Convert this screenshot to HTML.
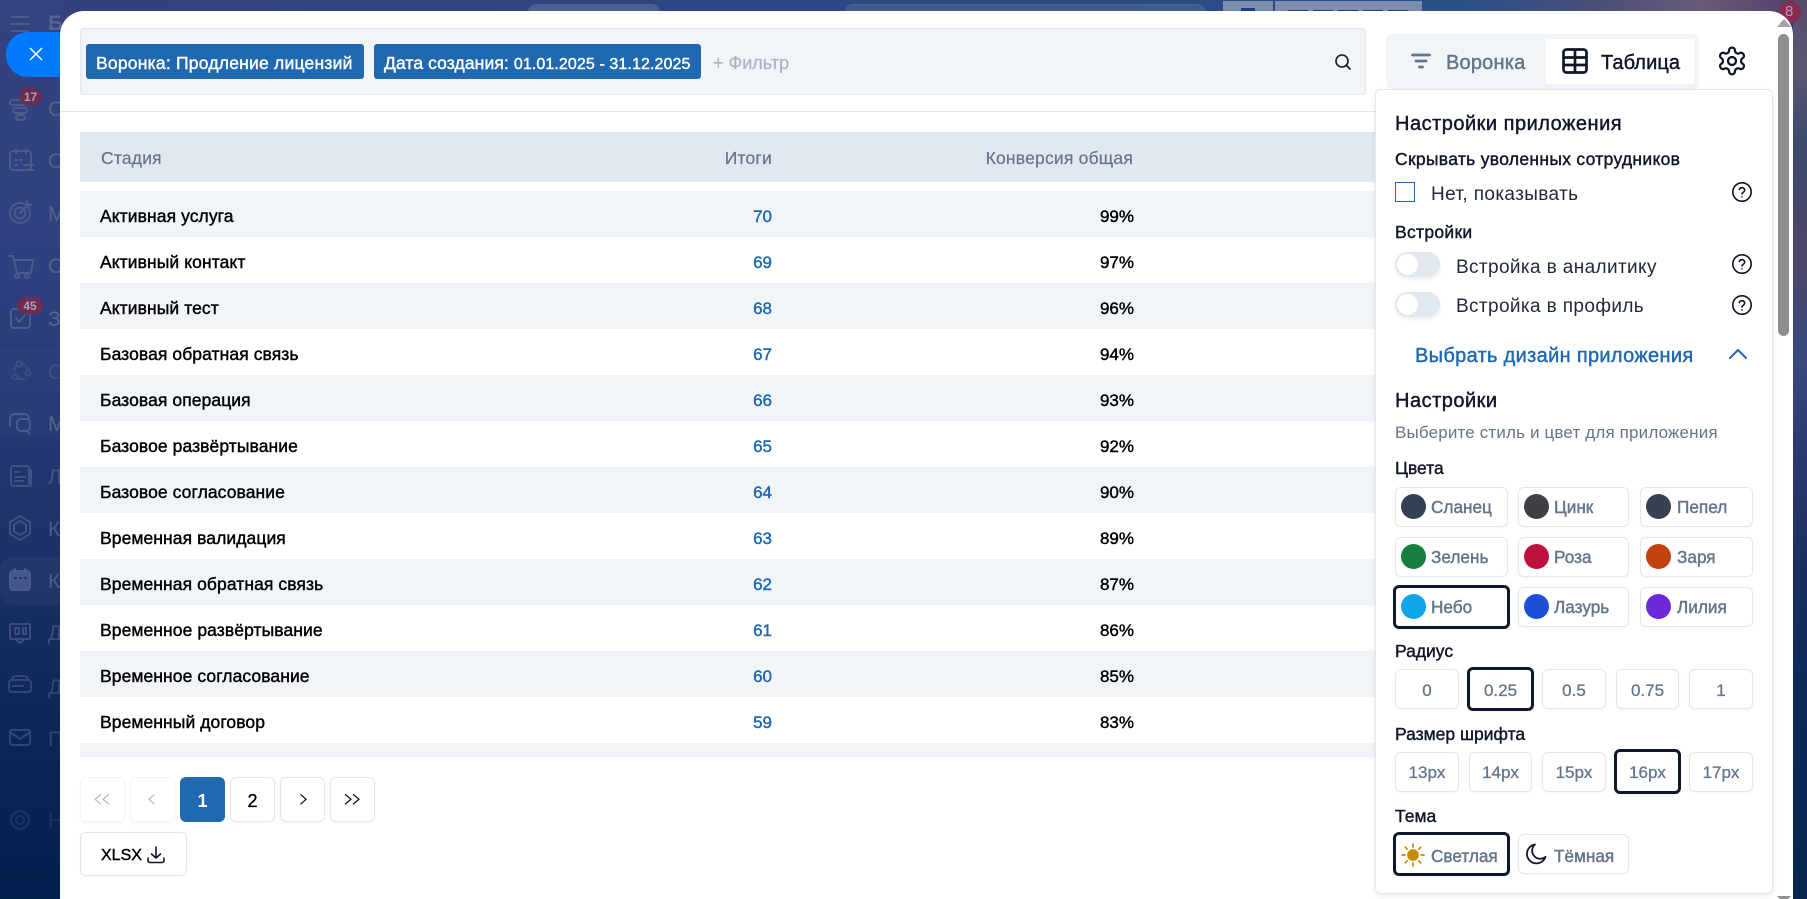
<!DOCTYPE html>
<html lang="ru"><head><meta charset="utf-8"><title>Таблица</title>
<style>
*{box-sizing:border-box}
html,body{margin:0;padding:0;width:1807px;height:899px;overflow:hidden;background:#0a2350}
body{position:relative;font-family:"Liberation Sans","Noto Sans CJK SC",sans-serif;font-size:16px;color:#000}
.a{position:absolute}
.t{position:absolute;white-space:nowrap;line-height:20px;height:20px}
.m{-webkit-text-stroke:.42px currentColor}
.r{text-align:right}
.row{position:absolute;left:80px;width:1300px;height:46px}
.odd{background:#f1f5f9}
.n{color:#2068b0;font-size:17px}
.g{color:#64748b}
.l{font-size:17.5px;letter-spacing:.08px}
.p{font-size:17px}
.h{font-size:17.5px;letter-spacing:.2px;-webkit-text-stroke:.2px currentColor}
.lab{font-size:17.500px;color:#0f172a}
.bl{font-size:17.2px}
.big{font-size:20px;letter-spacing:.5px;color:#0f172a}
.reg{font-size:19px;letter-spacing:.38px;color:#1e293b}
.b{position:absolute;background:#fff;border:1px solid #e2e8f0;border-radius:6px;box-shadow:0 1px 2px rgba(0,0,0,.04)}
.s{border:3px solid #0f172a}
.c{position:absolute;width:25px;height:25px;border-radius:50%}
.cen{position:absolute;text-align:center;white-space:nowrap;line-height:20px;font-size:17px;color:#64748b;-webkit-text-stroke:.3px currentColor}
svg{position:absolute;display:block;overflow:visible}
.ic{fill:none;stroke:#4b5c8a;stroke-width:2;stroke-linecap:round;stroke-linejoin:round}
.side{position:absolute;left:48px;font-size:21px;line-height:32px;color:#55658f;white-space:nowrap}
</style></head>
<body>
<!-- background -->
<div class="a" style="left:0;top:0;width:1807px;height:899px;background:linear-gradient(180deg,#33437f 0,#2f4080 30%,#1c3268 60%,#0d2656 80%,#04204d 100%)"></div>
<div class="a" style="left:60px;top:0;width:1747px;height:12px;background:linear-gradient(90deg,#33427f 0,#2e4684 40%,#2a5088 80%,#4b4f78 88%,#6a5a78 94%,#4c3f6a 100%)"></div>
<div class="a" style="left:1793px;top:0;width:14px;height:899px;background:linear-gradient(180deg,#564d6e 0,#5a5670 8%,#3a4a6e 16%,#4d4668 28%,#38497f 40%,#2d3a72 50%,#1c2f62 62%,#0e2a5c 75%,#08244f 100%)"></div>
<div class="a" style="left:528px;top:4px;width:132px;height:10px;background:#4b6091;border-radius:8px 8px 0 0"></div>
<div class="a" style="left:845px;top:4px;width:360px;height:10px;background:#3d5d8c;border-radius:8px 8px 0 0;border:1px solid #47658f"></div>
<div class="a" style="left:1223px;top:1px;width:50px;height:12px;background:#7d8db0"></div>
<div class="a" style="left:1275px;top:1px;width:147px;height:12px;background:#7d8db0"></div>
<div class="a" style="left:1241px;top:8px;width:14px;height:5px;background:#1c3f80"></div>
<div class="a" style="left:1288px;top:10px;width:120px;height:3px;background:repeating-linear-gradient(90deg,#1c3f80 0,#1c3f80 20px,#7d8db0 20px,#7d8db0 25px)"></div>
<div class="a" style="left:1779px;top:1px;width:22px;height:22px;border-radius:50%;background:#8a2c52"></div>
<div class="t" style="left:1785px;top:2px;color:#a99cc0;font-size:15px">8</div>

<!-- sidebar -->
<div class="a" style="left:0;top:348px;width:60px;height:90px;background:rgba(255,255,255,.015)"></div>
<div class="a" style="left:0;top:557px;width:60px;height:48px;background:rgba(255,255,255,.035);border-radius:12px 0 0 12px"></div>
<svg style="left:0;top:0" width="60" height="899" viewBox="0 0 60 899" class="ic">
<path d="M11 17h18M11 24h18M11 31h18"/>
<rect x="10" y="100" width="16" height="5" rx="2.5"/><rect x="13" y="108" width="14" height="5" rx="2.5"/><rect x="16" y="115" width="9" height="5" rx="2.5"/>
<rect x="10" y="151" width="21" height="19" rx="3"/><path d="M16 149v4M26 149v4M15 160h2M20 160h2M15 165h2M24 165h9M24 170h9"/>
<circle cx="20" cy="213" r="10"/><circle cx="20" cy="213" r="5.5"/><path d="M20 213l9-9M27 201v4h4"/>
<path d="M9 256h4l4 17h14l2-13H14"/><circle cx="17" cy="276" r="2"/><circle cx="27" cy="276" r="2"/>
<rect x="11" y="309" width="19" height="19" rx="3"/><path d="M16 318l3 4 6-7"/>
<g opacity=".5"><circle cx="19" cy="364" r="2.5"/><circle cx="15" cy="377" r="2.5"/><circle cx="28" cy="373" r="2.5"/><path d="M14 371c1-3 2-5 3-6M23 364c2 1 4 3 5 6M18 379h7"/></g>
<path d="M10 426v-7a5 5 0 0 1 5-5h9a5 5 0 0 1 5 4"/><rect x="17" y="419" width="13" height="12" rx="4"/><path d="M27 431l3 3"/>
<g opacity=".75"><rect x="11" y="466" width="18" height="20" rx="2"/><path d="M15 472h3M15 477h10M15 481h8M29 470h2v16"/></g>
<g opacity=".75"><path d="M20 516l10 6v12l-10 6-10-6v-12z"/><path d="M20 521l6 3.500v7l-6 3.500-6-3.500v-7z"/></g>
<rect x="10" y="571" width="20" height="19" rx="3" fill="#45578a"/><path d="M15 569v3M25 569v3"/><path d="M15 578h1M20 578h1M25 578h1" stroke="#1c3268"/>
<g opacity=".7"><rect x="10" y="624" width="20" height="15" rx="1"/><path d="M15 639l5 4 5-4M15 628h4v6h-4zM23 628h3v6h-3z"/></g>
<g opacity=".6"><rect x="9" y="680" width="22" height="12" rx="3"/><path d="M13 686h10M12 680c0-3 2-4 4-4h8c2 0 4 1 4 4"/></g>
<g opacity=".6"><rect x="10" y="730" width="20" height="15" rx="2"/><path d="M10 732l10 7 10-7"/></g>
<g opacity=".3"><circle cx="20" cy="820" r="4"/><circle cx="20" cy="820" r="9"/></g>
</svg>
<div class="a" style="left:19px;top:88px;width:23px;height:17px;border-radius:9px;background:#6f2c50"></div>
<div class="t" style="left:19px;top:87px;width:23px;text-align:center;color:#a8a3bb;font-size:12px;font-weight:bold">17</div>
<div class="a" style="left:17px;top:297px;width:26px;height:17px;border-radius:9px;background:#6f2c50"></div>
<div class="t" style="left:17px;top:296px;width:26px;text-align:center;color:#a8a3bb;font-size:12px;font-weight:bold">45</div>
<div class="side" style="top:8px;font-weight:bold">Б</div>
<div class="side" style="top:94px">С</div><div class="side" style="top:146px">О</div><div class="side" style="top:199px">М</div><div class="side" style="top:251px">С</div><div class="side" style="top:304px">З</div><div class="side" style="top:357px;opacity:.45">С</div><div class="side" style="top:409px">М</div><div class="side" style="top:462px;opacity:.7">Л</div><div class="side" style="top:514px;opacity:.8">К</div><div class="side" style="top:566px;opacity:.8">К</div><div class="side" style="top:618px;opacity:.6">Д</div><div class="side" style="top:672px;opacity:.5">Д</div><div class="side" style="top:724px;opacity:.5">П</div><div class="side" style="top:806px;opacity:.25">Н</div>
<div class="a" style="left:6px;top:32px;width:70px;height:45px;background:linear-gradient(90deg,#007bff 0,#007bff 70%,#0a6fe0 100%);border-radius:22px 0 0 22px"></div>
<svg style="left:30px;top:48px" width="12" height="12" viewBox="0 0 12 12"><path d="M0 0L12 12M12 0L0 12" stroke="#fff" stroke-width="1.500" fill="none"/></svg>

<!-- modal -->
<div class="a" style="left:60px;top:11px;width:1733px;height:900px;background:#fff;border-radius:24px 24px 0 0;overflow:hidden"></div>
<div class="a" style="left:60px;top:111px;width:1315px;height:1px;background:#e2e8f0"></div>

<!-- filter bar -->
<div class="a" style="left:80px;top:28px;width:1286px;height:67px;background:#f1f5f9;border:1px solid #e2e8f0;border-radius:3px"></div>
<div class="a" style="left:86px;top:44px;width:278px;height:35px;background:#2068b0;border-radius:3px"></div>
<div class="t m" style="left:96px;top:53px;color:#fff;font-size:17.5px;letter-spacing:.22px">Воронка: Продление лицензий</div>
<div class="a" style="left:374px;top:44px;width:327px;height:35px;background:#2068b0;border-radius:3px"></div>
<div class="t m" style="left:384px;top:53px;color:#fff;font-size:17.5px;letter-spacing:.1px">Дата создания: <span style="font-size:16px">01.01.2025 - 31.12.2025</span></div>
<div class="t" style="left:713px;top:53px;color:#aab4c4;font-size:18px;-webkit-text-stroke:.25px currentColor">+ Фильтр</div>
<svg style="left:1334px;top:53px" width="18" height="18" viewBox="0 0 18 18" fill="none" stroke="#0f172a" stroke-width="1.600" stroke-linecap="round"><circle cx="8" cy="8" r="6"/><path d="M12.500 12.500L16 16"/></svg>

<!-- table -->
<div class="a" style="left:80px;top:132px;width:1300px;height:50px;background:#e2e8f0"></div>
<div class="t g h" style="left:101px;top:148px">Стадия</div>
<div class="t g h r" style="right:1035px;top:148px">Итоги</div>
<div class="t g h r" style="right:674px;top:148px">Конверсия общая</div>

<div class="row odd" style="top:191px"></div>
<div class="row odd" style="top:283px"></div>
<div class="row odd" style="top:375px"></div>
<div class="row odd" style="top:467px"></div>
<div class="row odd" style="top:559px"></div>
<div class="row odd" style="top:651px"></div>
<div class="row odd" style="top:743px;height:14px"></div>

<div class="t m l" style="left:100px;top:206px">Активная услуга</div><div class="t m n r" style="right:1035px;top:207px">70</div><div class="t m p r" style="right:673px;top:207px">99%</div>
<div class="t m l" style="left:100px;top:252px">Активный контакт</div><div class="t m n r" style="right:1035px;top:253px">69</div><div class="t m p r" style="right:673px;top:253px">97%</div>
<div class="t m l" style="left:100px;top:298px">Активный тест</div><div class="t m n r" style="right:1035px;top:299px">68</div><div class="t m p r" style="right:673px;top:299px">96%</div>
<div class="t m l" style="left:100px;top:344px">Базовая обратная связь</div><div class="t m n r" style="right:1035px;top:345px">67</div><div class="t m p r" style="right:673px;top:345px">94%</div>
<div class="t m l" style="left:100px;top:390px">Базовая операция</div><div class="t m n r" style="right:1035px;top:391px">66</div><div class="t m p r" style="right:673px;top:391px">93%</div>
<div class="t m l" style="left:100px;top:436px">Базовое развёртывание</div><div class="t m n r" style="right:1035px;top:437px">65</div><div class="t m p r" style="right:673px;top:437px">92%</div>
<div class="t m l" style="left:100px;top:482px">Базовое согласование</div><div class="t m n r" style="right:1035px;top:483px">64</div><div class="t m p r" style="right:673px;top:483px">90%</div>
<div class="t m l" style="left:100px;top:528px">Временная валидация</div><div class="t m n r" style="right:1035px;top:529px">63</div><div class="t m p r" style="right:673px;top:529px">89%</div>
<div class="t m l" style="left:100px;top:574px">Временная обратная связь</div><div class="t m n r" style="right:1035px;top:575px">62</div><div class="t m p r" style="right:673px;top:575px">87%</div>
<div class="t m l" style="left:100px;top:620px">Временное развёртывание</div><div class="t m n r" style="right:1035px;top:621px">61</div><div class="t m p r" style="right:673px;top:621px">86%</div>
<div class="t m l" style="left:100px;top:666px">Временное согласование</div><div class="t m n r" style="right:1035px;top:667px">60</div><div class="t m p r" style="right:673px;top:667px">85%</div>
<div class="t m l" style="left:100px;top:712px">Временный договор</div><div class="t m n r" style="right:1035px;top:713px">59</div><div class="t m p r" style="right:673px;top:713px">83%</div>

<!-- pagination -->
<div class="b" style="left:80px;top:777px;width:45px;height:45px;border-color:#f1f5f9"></div>
<div class="b" style="left:130px;top:777px;width:45px;height:45px;border-color:#f1f5f9"></div>
<div class="a" style="left:180px;top:777px;width:45px;height:45px;background:#2068b0;border-radius:6px"></div>
<div class="b" style="left:230px;top:777px;width:45px;height:45px"></div>
<div class="b" style="left:280px;top:777px;width:45px;height:45px"></div>
<div class="b" style="left:330px;top:777px;width:45px;height:45px"></div>
<svg style="left:80px;top:777px" width="300" height="45" viewBox="0 0 300 45" fill="none" stroke-width="1.300"><path d="M21 17.300l-6 5 6 5M29 17.300l-6 5 6 5" stroke="#b8bcc4"/><path d="M74.500 17.300l-5.500 5 5.500 5" stroke="#b8bcc4"/><path d="M220.500 17.300l5.500 5-5.500 5" stroke="#0f172a"/><path d="M265 17.300l6 5-6 5M273 17.300l6 5-6 5" stroke="#0f172a"/></svg>
<div class="cen" style="left:180px;top:791px;width:45px;color:#fff;font-weight:bold;font-size:18px;-webkit-text-stroke:0">1</div>
<div class="cen" style="left:230px;top:791px;width:45px;color:#000;font-size:18px">2</div>
<div class="b" style="left:80px;top:832px;width:107px;height:44px"></div>
<div class="t m" style="left:101px;top:846px">XLSX</div>
<svg style="left:147px;top:846px" width="18" height="18" viewBox="0 0 18 18" fill="none" stroke="#0f172a" stroke-width="1.600" stroke-linecap="round" stroke-linejoin="round"><path d="M9 1v11M4.500 8L9 12l4.500-4M1 12v2.500A2 2 0 0 0 3 16.500h12a2 2 0 0 0 2-2V12"/></svg>

<!-- scrollbar -->
<div class="a" style="left:1778px;top:34px;width:11px;height:302px;background:#8f8f8f;border-radius:6px"></div>
<svg style="left:1777px;top:19px" width="14" height="8" viewBox="0 0 14 8"><path d="M7 0L14 8H0z" fill="#a3a3a3"/></svg>
<svg style="left:1777px;top:896px" width="14" height="3" viewBox="0 0 14 3"><path d="M0 0H14L11 3H3z" fill="#8f8f8f"/></svg>

<!-- tabs -->
<div class="a" style="left:1386px;top:34px;width:313px;height:55px;background:#f1f5f9;border-radius:6px"></div>
<div class="a" style="left:1546px;top:39px;width:148px;height:45px;background:#fff"></div>
<svg style="left:1411px;top:53px" width="20" height="16" viewBox="0 0 20 16" fill="none" stroke="#64748b" stroke-width="2.800" stroke-linecap="round"><path d="M1.500 2h17M5 8h10M8.500 14h3"/></svg>
<div class="t m g" style="left:1446px;top:53px;font-size:20px;letter-spacing:.2px">Воронка</div>
<svg style="left:1562px;top:48px" width="26" height="26" viewBox="0 0 26 26" fill="none" stroke="#0f172a" stroke-width="2.700"><rect x="1.500" y="1.500" width="23" height="23" rx="3"/><path d="M1.500 9.500h23M1.500 17h23M13 1.500v23"/></svg>
<div class="t m" style="left:1601px;top:53px;font-size:20px;color:#0f172a;letter-spacing:.1px">Таблица</div>
<svg style="left:1716px;top:45px" width="32" height="32" viewBox="0 0 24 24" fill="none" stroke="#0f172a" stroke-width="1.700" stroke-linecap="round" stroke-linejoin="round"><path d="M12.200 2h-.4a2 2 0 0 0-2 2v.2a2 2 0 0 1-1 1.700l-.4.300a2 2 0 0 1-2 0l-.2-.1a2 2 0 0 0-2.700.7l-.2.400a2 2 0 0 0 .7 2.700l.2.100a2 2 0 0 1 1 1.700v.5a2 2 0 0 1-1 1.700l-.2.100a2 2 0 0 0-.7 2.700l.2.400a2 2 0 0 0 2.700.7l.2-.1a2 2 0 0 1 2 0l.4.300a2 2 0 0 1 1 1.700v.2a2 2 0 0 0 2 2h.4a2 2 0 0 0 2-2v-.2a2 2 0 0 1 1-1.700l.4-.3a2 2 0 0 1 2 0l.2.100a2 2 0 0 0 2.700-.7l.2-.4a2 2 0 0 0-.7-2.700l-.2-.1a2 2 0 0 1-1-1.700v-.5a2 2 0 0 1 1-1.700l.2-.1a2 2 0 0 0 .7-2.700l-.2-.4a2 2 0 0 0-2.700-.7l-.2.100a2 2 0 0 1-2 0l-.4-.3a2 2 0 0 1-1-1.700V4a2 2 0 0 0-2-2z"/><circle cx="12" cy="12" r="3"/></svg>

<!-- settings panel -->
<div class="a" style="left:1375px;top:89px;width:398px;height:805px;background:#fff;border:1px solid #e2e8f0;border-radius:6px;box-shadow:0 2px 6px rgba(15,23,42,.08)"></div>
<div class="t m big" style="left:1395px;top:114px">Настройки приложения</div>
<div class="t m lab" style="left:1395px;top:149px;letter-spacing:.3px">Скрывать уволенных сотрудников</div>
<div class="a" style="left:1395px;top:182px;width:20px;height:20px;border:1px solid #2068b0;background:#fff"></div>
<div class="t reg" style="left:1431px;top:185px">Нет, показывать</div>
<div class="t m lab" style="left:1395px;top:222px;letter-spacing:.3px">Встройки</div>

<div class="a" style="left:1395px;top:252px;width:45px;height:25px;border-radius:13px;background:#e2e8f0;box-shadow:0 2px 4px rgba(15,23,42,.08)"></div>
<div class="a" style="left:1397px;top:254px;width:21px;height:21px;border-radius:50%;background:#fff"></div>
<div class="t reg" style="left:1456px;top:258px">Встройка в аналитику</div>
<div class="a" style="left:1395px;top:292px;width:45px;height:25px;border-radius:13px;background:#e2e8f0;box-shadow:0 2px 4px rgba(15,23,42,.08)"></div>
<div class="a" style="left:1397px;top:294px;width:21px;height:21px;border-radius:50%;background:#fff"></div>
<div class="t reg" style="left:1456px;top:297px">Встройка в профиль</div>

<svg style="left:1732px;top:182px" width="20" height="20" viewBox="0 0 20 20" fill="none" stroke="#0f172a" stroke-width="1.600" stroke-linecap="round"><circle cx="10" cy="10" r="9.200"/><path d="M7.300 7.500a2.800 2.800 0 0 1 5.400.7c0 1.800-2.700 2.200-2.700 3.800"/><path d="M10 14.800v.1"/></svg>
<svg style="left:1732px;top:254px" width="20" height="20" viewBox="0 0 20 20" fill="none" stroke="#0f172a" stroke-width="1.600" stroke-linecap="round"><circle cx="10" cy="10" r="9.200"/><path d="M7.300 7.500a2.800 2.800 0 0 1 5.400.7c0 1.800-2.700 2.200-2.700 3.800"/><path d="M10 14.800v.1"/></svg>
<svg style="left:1732px;top:295px" width="20" height="20" viewBox="0 0 20 20" fill="none" stroke="#0f172a" stroke-width="1.600" stroke-linecap="round"><circle cx="10" cy="10" r="9.200"/><path d="M7.300 7.500a2.800 2.800 0 0 1 5.400.7c0 1.800-2.700 2.200-2.700 3.800"/><path d="M10 14.800v.1"/></svg>

<div class="t m" style="left:1415px;top:346px;font-size:20px;color:#2068b0;letter-spacing:.32px">Выбрать дизайн приложения</div>
<svg style="left:1729px;top:349px" width="18" height="10" viewBox="0 0 18 10" fill="none" stroke="#2068b0" stroke-width="2" stroke-linecap="round" stroke-linejoin="round"><path d="M1 9l8-8 8 8"/></svg>
<div class="t m big" style="left:1395px;top:391px">Настройки</div>
<div class="t g" style="left:1395px;top:423px;font-size:17px;letter-spacing:.16px">Выберите стиль и цвет для приложения</div>
<div class="t m lab" style="left:1395px;top:458px">Цвета</div>

<div class="b" style="left:1395px;top:487px;width:113px;height:40px"></div>
<div class="b" style="left:1518px;top:487px;width:111px;height:40px"></div>
<div class="b" style="left:1640px;top:487px;width:113px;height:40px"></div>
<div class="b" style="left:1395px;top:537px;width:113px;height:40px"></div>
<div class="b" style="left:1518px;top:537px;width:111px;height:40px"></div>
<div class="b" style="left:1640px;top:537px;width:113px;height:40px"></div>
<div class="b s" style="left:1393px;top:585px;width:117px;height:44px"></div>
<div class="b" style="left:1518px;top:587px;width:111px;height:40px"></div>
<div class="b" style="left:1640px;top:587px;width:113px;height:40px"></div>

<div class="c" style="left:1401px;top:494px;background:#334155"></div>
<div class="c" style="left:1524px;top:494px;background:#3f3f46"></div>
<div class="c" style="left:1646px;top:494px;background:#374151"></div>
<div class="c" style="left:1401px;top:544px;background:#15803d"></div>
<div class="c" style="left:1524px;top:544px;background:#be123c"></div>
<div class="c" style="left:1646px;top:544px;background:#c2410c"></div>
<div class="c" style="left:1401px;top:594px;background:#0ea5e9"></div>
<div class="c" style="left:1524px;top:594px;background:#1d4ed8"></div>
<div class="c" style="left:1646px;top:594px;background:#6d28d9"></div>

<div class="t m g bl" style="left:1431px;top:497px">Сланец</div>
<div class="t m g bl" style="left:1554px;top:497px">Цинк</div>
<div class="t m g bl" style="left:1677px;top:497px">Пепел</div>
<div class="t m g bl" style="left:1431px;top:547px">Зелень</div>
<div class="t m g bl" style="left:1554px;top:547px">Роза</div>
<div class="t m g bl" style="left:1677px;top:547px">Заря</div>
<div class="t m g bl" style="left:1431px;top:597px">Небо</div>
<div class="t m g bl" style="left:1554px;top:597px">Лазурь</div>
<div class="t m g bl" style="left:1677px;top:597px">Лилия</div>

<div class="t m lab" style="left:1395px;top:641px">Радиус</div>
<div class="b" style="left:1395px;top:669px;width:64px;height:40px"></div>
<div class="b s" style="left:1467px;top:667px;width:67px;height:44px"></div>
<div class="b" style="left:1542px;top:669px;width:64px;height:40px"></div>
<div class="b" style="left:1616px;top:669px;width:63px;height:40px"></div>
<div class="b" style="left:1689px;top:669px;width:64px;height:40px"></div>
<div class="cen" style="left:1395px;top:681px;width:64px">0</div>
<div class="cen" style="left:1467px;top:681px;width:67px">0.25</div>
<div class="cen" style="left:1542px;top:681px;width:64px">0.5</div>
<div class="cen" style="left:1616px;top:681px;width:63px">0.75</div>
<div class="cen" style="left:1689px;top:681px;width:64px">1</div>

<div class="t m lab" style="left:1395px;top:724px">Размер шрифта</div>
<div class="b" style="left:1395px;top:752px;width:64px;height:40px"></div>
<div class="b" style="left:1469px;top:752px;width:63px;height:40px"></div>
<div class="b" style="left:1542px;top:752px;width:64px;height:40px"></div>
<div class="b s" style="left:1614px;top:749px;width:67px;height:45px"></div>
<div class="b" style="left:1689px;top:752px;width:64px;height:40px"></div>
<div class="cen" style="left:1395px;top:763px;width:64px">13px</div>
<div class="cen" style="left:1469px;top:763px;width:63px">14px</div>
<div class="cen" style="left:1542px;top:763px;width:64px">15px</div>
<div class="cen" style="left:1614px;top:763px;width:67px">16px</div>
<div class="cen" style="left:1689px;top:763px;width:64px">17px</div>

<div class="t m lab" style="left:1395px;top:806px">Тема</div>
<div class="b s" style="left:1393px;top:832px;width:117px;height:44px"></div>
<div class="b" style="left:1518px;top:834px;width:111px;height:40px"></div>
<svg style="left:1401px;top:843px" width="24" height="24" viewBox="0 0 24 24" fill="none" stroke="#ca8a04" stroke-width="1.700" stroke-linecap="round"><circle cx="12" cy="12" r="5" fill="#ca8a04"/><path d="M12 1v3M12 20v3M1 12h3M20 12h3M4.200 4.200l2 2M17.800 17.800l2 2M4.200 19.800l2-2M17.800 6.200l2-2"/></svg>
<svg style="left:1525px;top:843px" width="22" height="22" viewBox="0 0 22 22" fill="none" stroke="#0f172a" stroke-width="1.800" stroke-linejoin="round"><path d="M10 1.500a9.500 9.500 0 1 0 10.500 12.300A8 8 0 0 1 10 1.500z"/></svg>
<div class="t m g bl" style="left:1431px;top:846px">Светлая</div>
<div class="t m g bl" style="left:1554px;top:846px">Тёмная</div>
</body></html>
